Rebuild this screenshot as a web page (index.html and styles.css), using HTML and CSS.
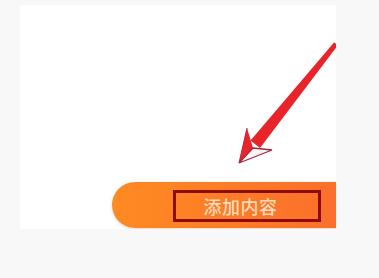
FILE: index.html
```html
<!DOCTYPE html>
<html lang="zh">
<head>
<meta charset="utf-8">
<link rel="stylesheet" href="styles.css">
</head>
<body>
<div class="panel">
  <div class="spacer"></div>
  <div class="action-row">
    <button class="add-btn"><span class="label">添加内容</span></button>
  </div>
  <svg class="arrow" width="316" height="224" viewBox="0 0 316 224">
    <polygon points="314,37.5 318,40 240,143 230.5,135.5" fill="#e8232a"/>
    <polygon points="227,123 219,158 233,143" fill="#e8232a"/>
    <polygon points="233,143 252,145 219,158" fill="#fff5f5" stroke="#a3283f" stroke-width="1.3" stroke-linejoin="miter"/>
    <line x1="227" y1="123" x2="219" y2="158" stroke="#c4203a" stroke-width="1"/>
  </svg>
</div>
</body>
</html>
```
FILE: styles.css
```css
html, body {
  margin: 0;
  padding: 0;
  background: #f8f8f8;
  width: 379px;
  height: 278px;
  overflow: hidden;
}
.panel {
  position: relative;
  margin: 5px 0 0 20px;
  width: 316px;
  height: 224px;
  background: #ffffff;
  display: flex;
  flex-direction: column;
  overflow: hidden;
}
.spacer {
  flex: 1;
}
.action-row {
  display: flex;
  padding-left: 92px;
  padding-bottom: 1px;
}
.add-btn {
  width: 224px;
  height: 46px;
  border: none;
  border-radius: 23px 0 0 23px;
  background: linear-gradient(90deg, #fe8a22 0%, #fd7d26 50%, #fb6f2c 100%);
  box-shadow: 0 1px 3px rgba(160, 80, 20, 0.25);
  padding: 8px 0 0 61px;
  display: flex;
  align-items: flex-start;
  cursor: pointer;
}
.label {
  box-sizing: border-box;
  width: 148px;
  height: 32px;
  border: 3px solid #8e0b0b;
  padding-right: 13px;
  display: flex;
  align-items: center;
  justify-content: center;
  font-family: "Noto Sans CJK SC", "Noto Sans", sans-serif;
  font-size: 18px;
  font-weight: 500;
  color: #fcdcbd;
  letter-spacing: 0.5px;
  line-height: 1;
}
.arrow {
  position: absolute;
  left: 0;
  top: 0;
  pointer-events: none;
}
```
